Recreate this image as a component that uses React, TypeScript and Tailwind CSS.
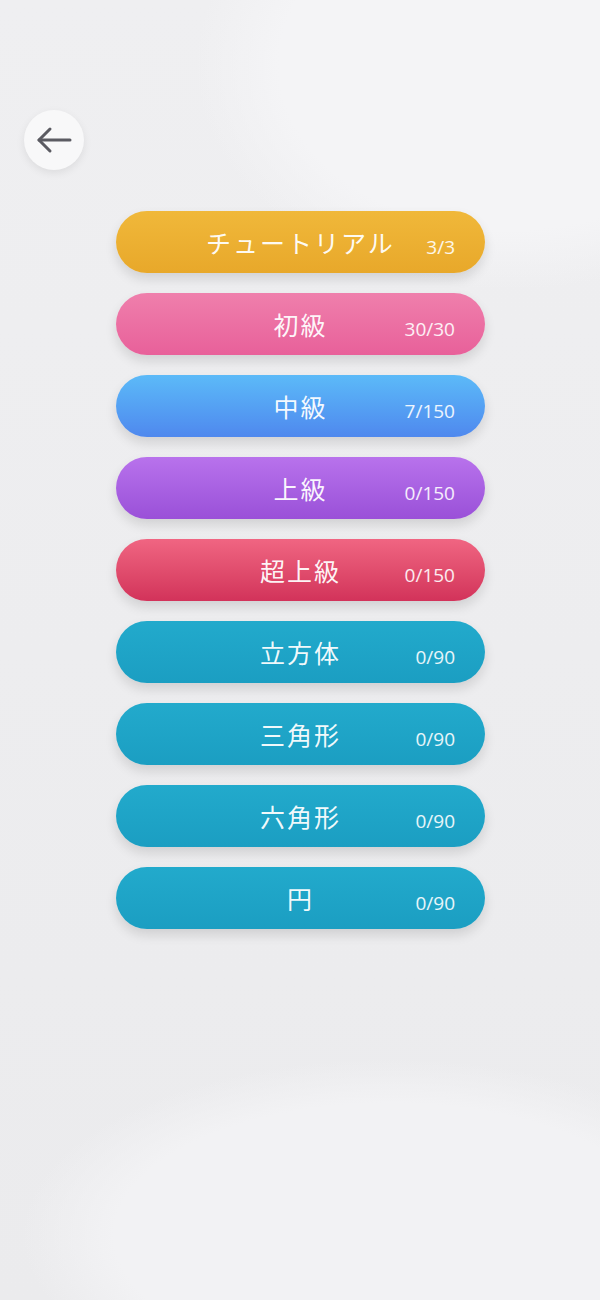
type Level = {
  title: string;
  count: string;
  bg: string;
};

const LEVELS: Level[] = [
  { title: 'チュートリアル', count: '3/3', bg: 'bg-gradient-to-b from-[#f0b83a] to-[#e8a82a]' },
  { title: '初級', count: '30/30', bg: 'bg-gradient-to-b from-[#ef7fac] to-[#e8609a]' },
  { title: '中級', count: '7/150', bg: 'bg-gradient-to-b from-[#5cbaf8] to-[#4f88ee]' },
  { title: '上級', count: '0/150', bg: 'bg-gradient-to-b from-[#b872ec] to-[#9a50d8]' },
  { title: '超上級', count: '0/150', bg: 'bg-gradient-to-b from-[#f06582] to-[#d2325a]' },
  { title: '立方体', count: '0/90', bg: 'bg-gradient-to-b from-[#22aacc] to-[#1b9ec2]' },
  { title: '三角形', count: '0/90', bg: 'bg-gradient-to-b from-[#22aacc] to-[#1b9ec2]' },
  { title: '六角形', count: '0/90', bg: 'bg-gradient-to-b from-[#22aacc] to-[#1b9ec2]' },
  { title: '円', count: '0/90', bg: 'bg-gradient-to-b from-[#22aacc] to-[#1b9ec2]' },
];

function LevelButton({ level }: { level: Level }) {
  return (
    <button
      className={`h-[62px] w-[369px] rounded-full ${level.bg} text-white shadow-[0_6px_12px_rgba(0,0,0,0.12)] grid grid-cols-[1fr_auto_1fr] items-center`}
    >
      <span />
      <span className="text-[25px] font-normal tracking-[0.08em] leading-none text-white/95 whitespace-nowrap">
        {level.title}
      </span>
      <span className="justify-self-end pr-[30px] pt-[11px] text-[19px] leading-none font-['Open_Sans',sans-serif] text-white/90">
        {level.count}
      </span>
    </button>
  );
}

export default function App() {
  return (
    <div className="w-[600px] h-[1300px] overflow-hidden font-['Noto_Sans_CJK_JP','Noto_Sans',sans-serif] bg-[#ececee] bg-[radial-gradient(ellipse_420px_300px_at_85%_5%,#f4f4f6_0%,#f4f4f6_55%,transparent_75%),radial-gradient(ellipse_460px_220px_at_65%_95%,#f2f2f4_0%,#f2f2f4_60%,transparent_80%),linear-gradient(180deg,#efeff1,#ebebed)]">
      <div className="flex flex-col">
        <div className="pt-[110px] pl-[24px]">
          <button className="w-[60px] h-[60px] rounded-full bg-[#f8f8f9] shadow-[0_3px_8px_rgba(0,0,0,0.08)] flex items-center justify-center">
            <svg width="36" height="28" viewBox="0 0 36 28" fill="none" stroke="#5b5b62" strokeWidth="3" strokeLinecap="round" strokeLinejoin="round">
              <path d="M34 14H3" />
              <path d="M14 3L3 14l11 11" />
            </svg>
          </button>
        </div>

        <div className="mt-[41px] flex flex-col items-center gap-[20px] pl-[1px]">
          {LEVELS.map((l) => (
            <LevelButton key={l.title} level={l} />
          ))}
        </div>
      </div>
    </div>
  );
}
